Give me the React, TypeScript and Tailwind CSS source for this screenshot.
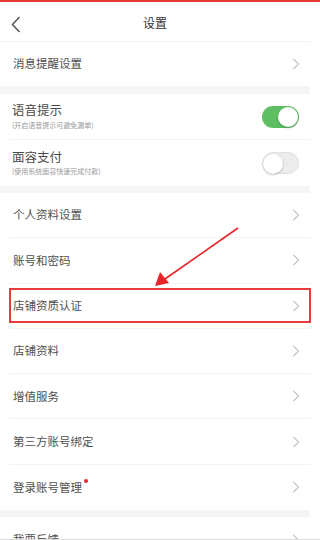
import React from "react";

const font = { fontFamily: '"Noto Sans CJK SC", "Noto Sans", sans-serif' };

function Chevron() {
  return (
    <svg width="8" height="12" viewBox="0 0 8 12" className="shrink-0">
      <path d="M1.5 1 L6.5 6 L1.5 11" fill="none" stroke="#c4c4c4" strokeWidth="1.2" />
    </svg>
  );
}

function Row({ label, dot, last }: { label: string; dot?: boolean; last?: boolean }) {
  return (
    <div className="h-[45.3px] pl-[10px]">
      <div className={`h-full flex items-center justify-between pr-[10px] ${last ? "" : "border-b border-[#f3f3f3]"}`}>
        <div className="relative pl-[3px] text-[11.5px] text-[#505050] leading-none">
          {label}
          {dot && <span className="absolute -right-[6px] -top-[3px] w-[4px] h-[4px] rounded-full bg-[#e8262a]" />}
        </div>
        <Chevron />
      </div>
    </div>
  );
}

function Toggle({ on }: { on: boolean }) {
  return (
    <div
      className={`w-[37px] h-[22px] rounded-full relative ${
        on ? "bg-[#5dbe62]" : "bg-[#ececec] border border-[#e0e0e0]"
      }`}
    >
      <div
        className={`absolute top-[1px] w-[20px] h-[20px] rounded-full bg-white shadow-[0_1px_2px_rgba(0,0,0,0.25)] ${
          on ? "right-[1px]" : "left-[0px] top-[0px]"
        }`}
      />
    </div>
  );
}

function ToggleRow({ title, sub, on, last }: { title: string; sub: string; on: boolean; last?: boolean }) {
  return (
    <div className="h-[46px] pl-[10px]">
      <div className={`h-full flex items-center justify-between pr-[11px] ${last ? "" : "border-b border-[#f3f3f3]"}`}>
        <div className="pl-[2px] flex flex-col">
          <div className="text-[12.5px] text-[#4a4a4a] leading-none">{title}</div>
          <div className="text-[7px] text-[#9a9a9a] leading-none mt-[5px]">{sub}</div>
        </div>
        <Toggle on={on} />
      </div>
    </div>
  );
}

export default function App() {
  return (
    <div className="w-[320px] h-[540px] overflow-hidden relative bg-white border-b border-[#dcdcdc]" style={font}>
      <div className="h-[2px] w-full bg-[#e53935]" />
      <div className="w-[310px]">
        <div className="h-[40px] relative flex items-center justify-center border-b border-[#f3f3f3]">
          <svg width="10" height="17" viewBox="0 0 10 17" className="absolute left-[11px] top-[14px]">
            <path d="M8.5 1 L1.5 8.5 L8.5 16" fill="none" stroke="#555" strokeWidth="1.5" />
          </svg>
          <div className="text-[12px] text-[#333] leading-none mt-[3px]">设置</div>
        </div>
        <div className="h-[44px] pl-[10px]">
          <div className="h-full flex items-center justify-between pr-[10px]">
            <div className="pl-[3px] text-[11.5px] text-[#505050] leading-none">消息提醒设置</div>
            <Chevron />
          </div>
        </div>
        <div className="h-[8px] bg-[#f5f5f5]" />
        <ToggleRow title="语音提示" sub="(开启语音提示可避免漏单)" on />
        <ToggleRow title="面容支付" sub="(使用系统面容快速完成付款)" on={false} last />
        <div className="h-[7px] bg-[#f5f5f5]" />
        <Row label="个人资料设置" />
        <Row label="账号和密码" />
        <Row label="店铺资质认证" />
        <Row label="店铺资料" />
        <Row label="增值服务" />
        <Row label="第三方账号绑定" />
        <Row label="登录账号管理" dot last />
        <div className="h-[7px] bg-[#f5f5f5]" />
        <Row label="我要反馈" last />
      </div>

      <div className="absolute left-[9px] top-[288px] w-[302px] h-[35px] border-2 border-[#ea3a3d]" />
      <svg className="absolute left-0 top-0" width="320" height="540" viewBox="0 0 320 540">
        <line x1="238" y1="228" x2="165" y2="279" stroke="#e8262a" strokeWidth="1.6" />
        <polygon points="155,286 160,272 169,283" fill="#e8262a" />
      </svg>
    </div>
  );
}
